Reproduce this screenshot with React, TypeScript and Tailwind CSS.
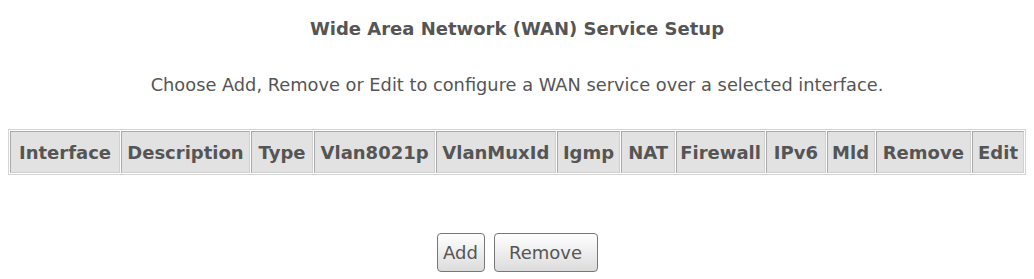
import React from "react";

const columns = [
  { label: "Interface", w: "w-[112px]" },
  { label: "Description", w: "w-[130px]" },
  { label: "Type", w: "w-[64px]" },
  { label: "Vlan8021p", w: "w-[122px]" },
  { label: "VlanMuxId", w: "w-[121px]" },
  { label: "Igmp", w: "w-[65px]" },
  { label: "NAT", w: "w-[55px]" },
  { label: "Firewall", w: "w-[90px]" },
  { label: "IPv6", w: "w-[61px]" },
  { label: "Mld", w: "w-[49px]" },
  { label: "Remove", w: "w-[97px]" },
  { label: "Edit", w: "w-[53px]" },
];

export default function App() {
  return (
    <div className="min-h-screen bg-white px-2 text-[#555] font-['DejaVu_Sans',Tahoma,sans-serif]">
      <div className="pt-[18px] text-center text-[18px] leading-[22px] font-bold">
        Wide Area Network (WAN) Service Setup
      </div>
      <div className="mt-[34px] text-center text-[17.8px] leading-[22px]">
        Choose Add, Remove or Edit to configure a WAN service over a selected interface.
      </div>

      <table className="mt-[33px] w-full border border-[#d4d4d4] border-separate border-spacing-[1px]">
        <thead>
          <tr>
            {columns.map((c) => (
              <th
                key={c.label}
                className={`${c.w} h-[42px] border border-t-[#a9a9a9] border-l-[#a9a9a9] border-r-[#d0d0d0] border-b-[#d0d0d0] bg-[#e2e2e2] px-0 text-center text-[18px] font-bold`}
              >
                {c.label}
              </th>
            ))}
          </tr>
        </thead>
      </table>

      <div className="mt-[58px] flex justify-center gap-[9px]">
        <button className="h-[39px] w-[48px] rounded-[4px] border border-[#777] bg-gradient-to-b from-white to-[#dcdcdc] text-[18px] text-[#555]">
          Add
        </button>
        <button className="h-[39px] w-[104px] rounded-[4px] border border-[#777] bg-gradient-to-b from-white to-[#dcdcdc] text-[18px] text-[#555]">
          Remove
        </button>
      </div>
    </div>
  );
}
